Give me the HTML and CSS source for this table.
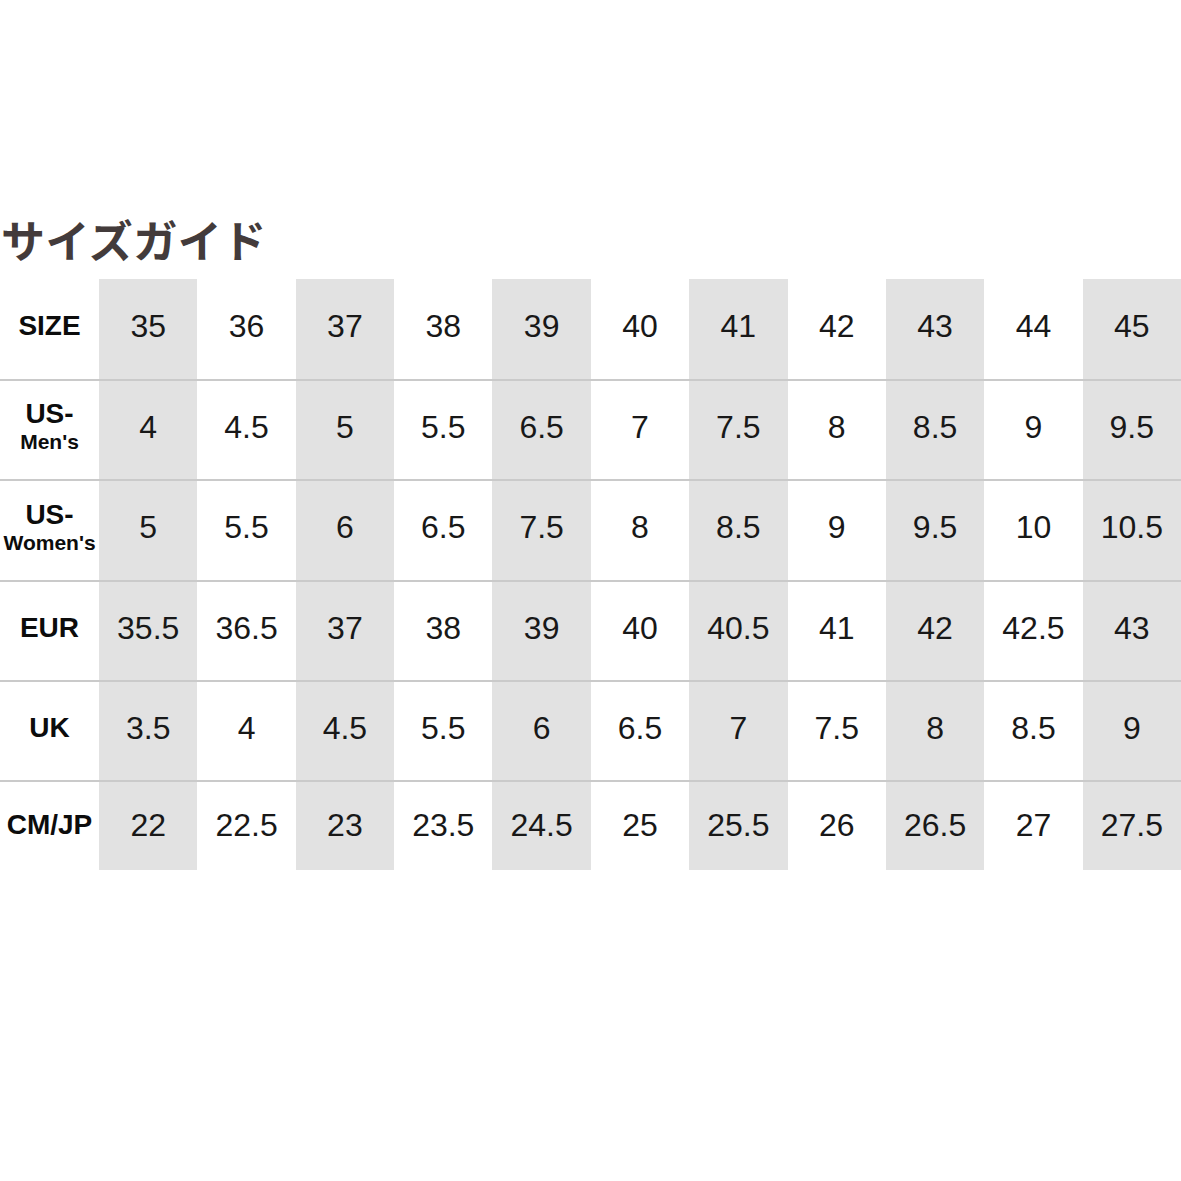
FILE: index.html
```html
<!DOCTYPE html>
<html lang="ja">
<head>
<meta charset="utf-8">
<title>サイズガイド</title>
<link rel="stylesheet" href="styles.css">
</head>
<body>
<main class="page">
  <h1 class="title">サイズガイド</h1>
  <div class="chart">
    <div class="row">
      <div class="label"><span class="big">SIZE</span></div>
      <div class="cell g">35</div><div class="cell">36</div><div class="cell g">37</div><div class="cell">38</div><div class="cell g">39</div><div class="cell">40</div><div class="cell g">41</div><div class="cell">42</div><div class="cell g">43</div><div class="cell">44</div><div class="cell g">45</div>
    </div>
    <div class="row lined">
      <div class="label"><span class="big">US-</span><span class="small">Men's</span></div>
      <div class="cell g">4</div><div class="cell">4.5</div><div class="cell g">5</div><div class="cell">5.5</div><div class="cell g">6.5</div><div class="cell">7</div><div class="cell g">7.5</div><div class="cell">8</div><div class="cell g">8.5</div><div class="cell">9</div><div class="cell g">9.5</div>
    </div>
    <div class="row lined r3">
      <div class="label"><span class="big">US-</span><span class="small">Women's</span></div>
      <div class="cell g">5</div><div class="cell">5.5</div><div class="cell g">6</div><div class="cell">6.5</div><div class="cell g">7.5</div><div class="cell">8</div><div class="cell g">8.5</div><div class="cell">9</div><div class="cell g">9.5</div><div class="cell">10</div><div class="cell g">10.5</div>
    </div>
    <div class="row lined">
      <div class="label"><span class="big">EUR</span></div>
      <div class="cell g">35.5</div><div class="cell">36.5</div><div class="cell g">37</div><div class="cell">38</div><div class="cell g">39</div><div class="cell">40</div><div class="cell g">40.5</div><div class="cell">41</div><div class="cell g">42</div><div class="cell">42.5</div><div class="cell g">43</div>
    </div>
    <div class="row lined">
      <div class="label"><span class="big">UK</span></div>
      <div class="cell g">3.5</div><div class="cell">4</div><div class="cell g">4.5</div><div class="cell">5.5</div><div class="cell g">6</div><div class="cell">6.5</div><div class="cell g">7</div><div class="cell">7.5</div><div class="cell g">8</div><div class="cell">8.5</div><div class="cell g">9</div>
    </div>
    <div class="row lined last">
      <div class="label"><span class="big">CM/JP</span></div>
      <div class="cell g">22</div><div class="cell">22.5</div><div class="cell g">23</div><div class="cell">23.5</div><div class="cell g">24.5</div><div class="cell">25</div><div class="cell g">25.5</div><div class="cell">26</div><div class="cell g">26.5</div><div class="cell">27</div><div class="cell g">27.5</div>
    </div>
  </div>
</main>
</body>
</html>
```
FILE: styles.css
```css
html, body {
  margin: 0;
  padding: 0;
  background: #ffffff;
}

.page {
  width: 1181px;
  height: 1181px;
  padding-top: 217px;
  box-sizing: border-box;
  font-family: "Liberation Sans", Arial, sans-serif;
  color: #181818;
}

.title {
  margin: 0 0 17px 1px;
  font-family: "Noto Sans CJK JP", "Noto Sans", sans-serif;
  font-weight: 700;
  font-size: 44px;
  line-height: 45px;
  color: #433b3b;
  letter-spacing: 0.5px;
}

.chart {
  width: 1181px;
}

.row {
  display: grid;
  grid-template-columns: 99px repeat(11, 1fr);
  height: 100px;
  box-sizing: border-box;
}

.row.lined {
  border-top: 2px solid #cacaca;
  height: 100px;
}

.row.r3 {
  height: 101px;
}

.row.last {
  height: 90px;
}

.cell {
  display: flex;
  align-items: center;
  justify-content: center;
  font-size: 32px;
  padding-bottom: 6px;
  box-sizing: border-box;
}

.row.last .cell,
.row.last .label {
  padding-bottom: 2px;
}

.cell.g {
  background: #e2e2e2;
}

.label {
  display: flex;
  flex-direction: column;
  align-items: center;
  justify-content: center;
  font-weight: 700;
  padding-bottom: 6px;
  box-sizing: border-box;
  color: #0c0c0c;
}

.big {
  font-size: 28px;
  line-height: 30px;
}

.small {
  font-size: 21px;
  line-height: 26px;
}
```
